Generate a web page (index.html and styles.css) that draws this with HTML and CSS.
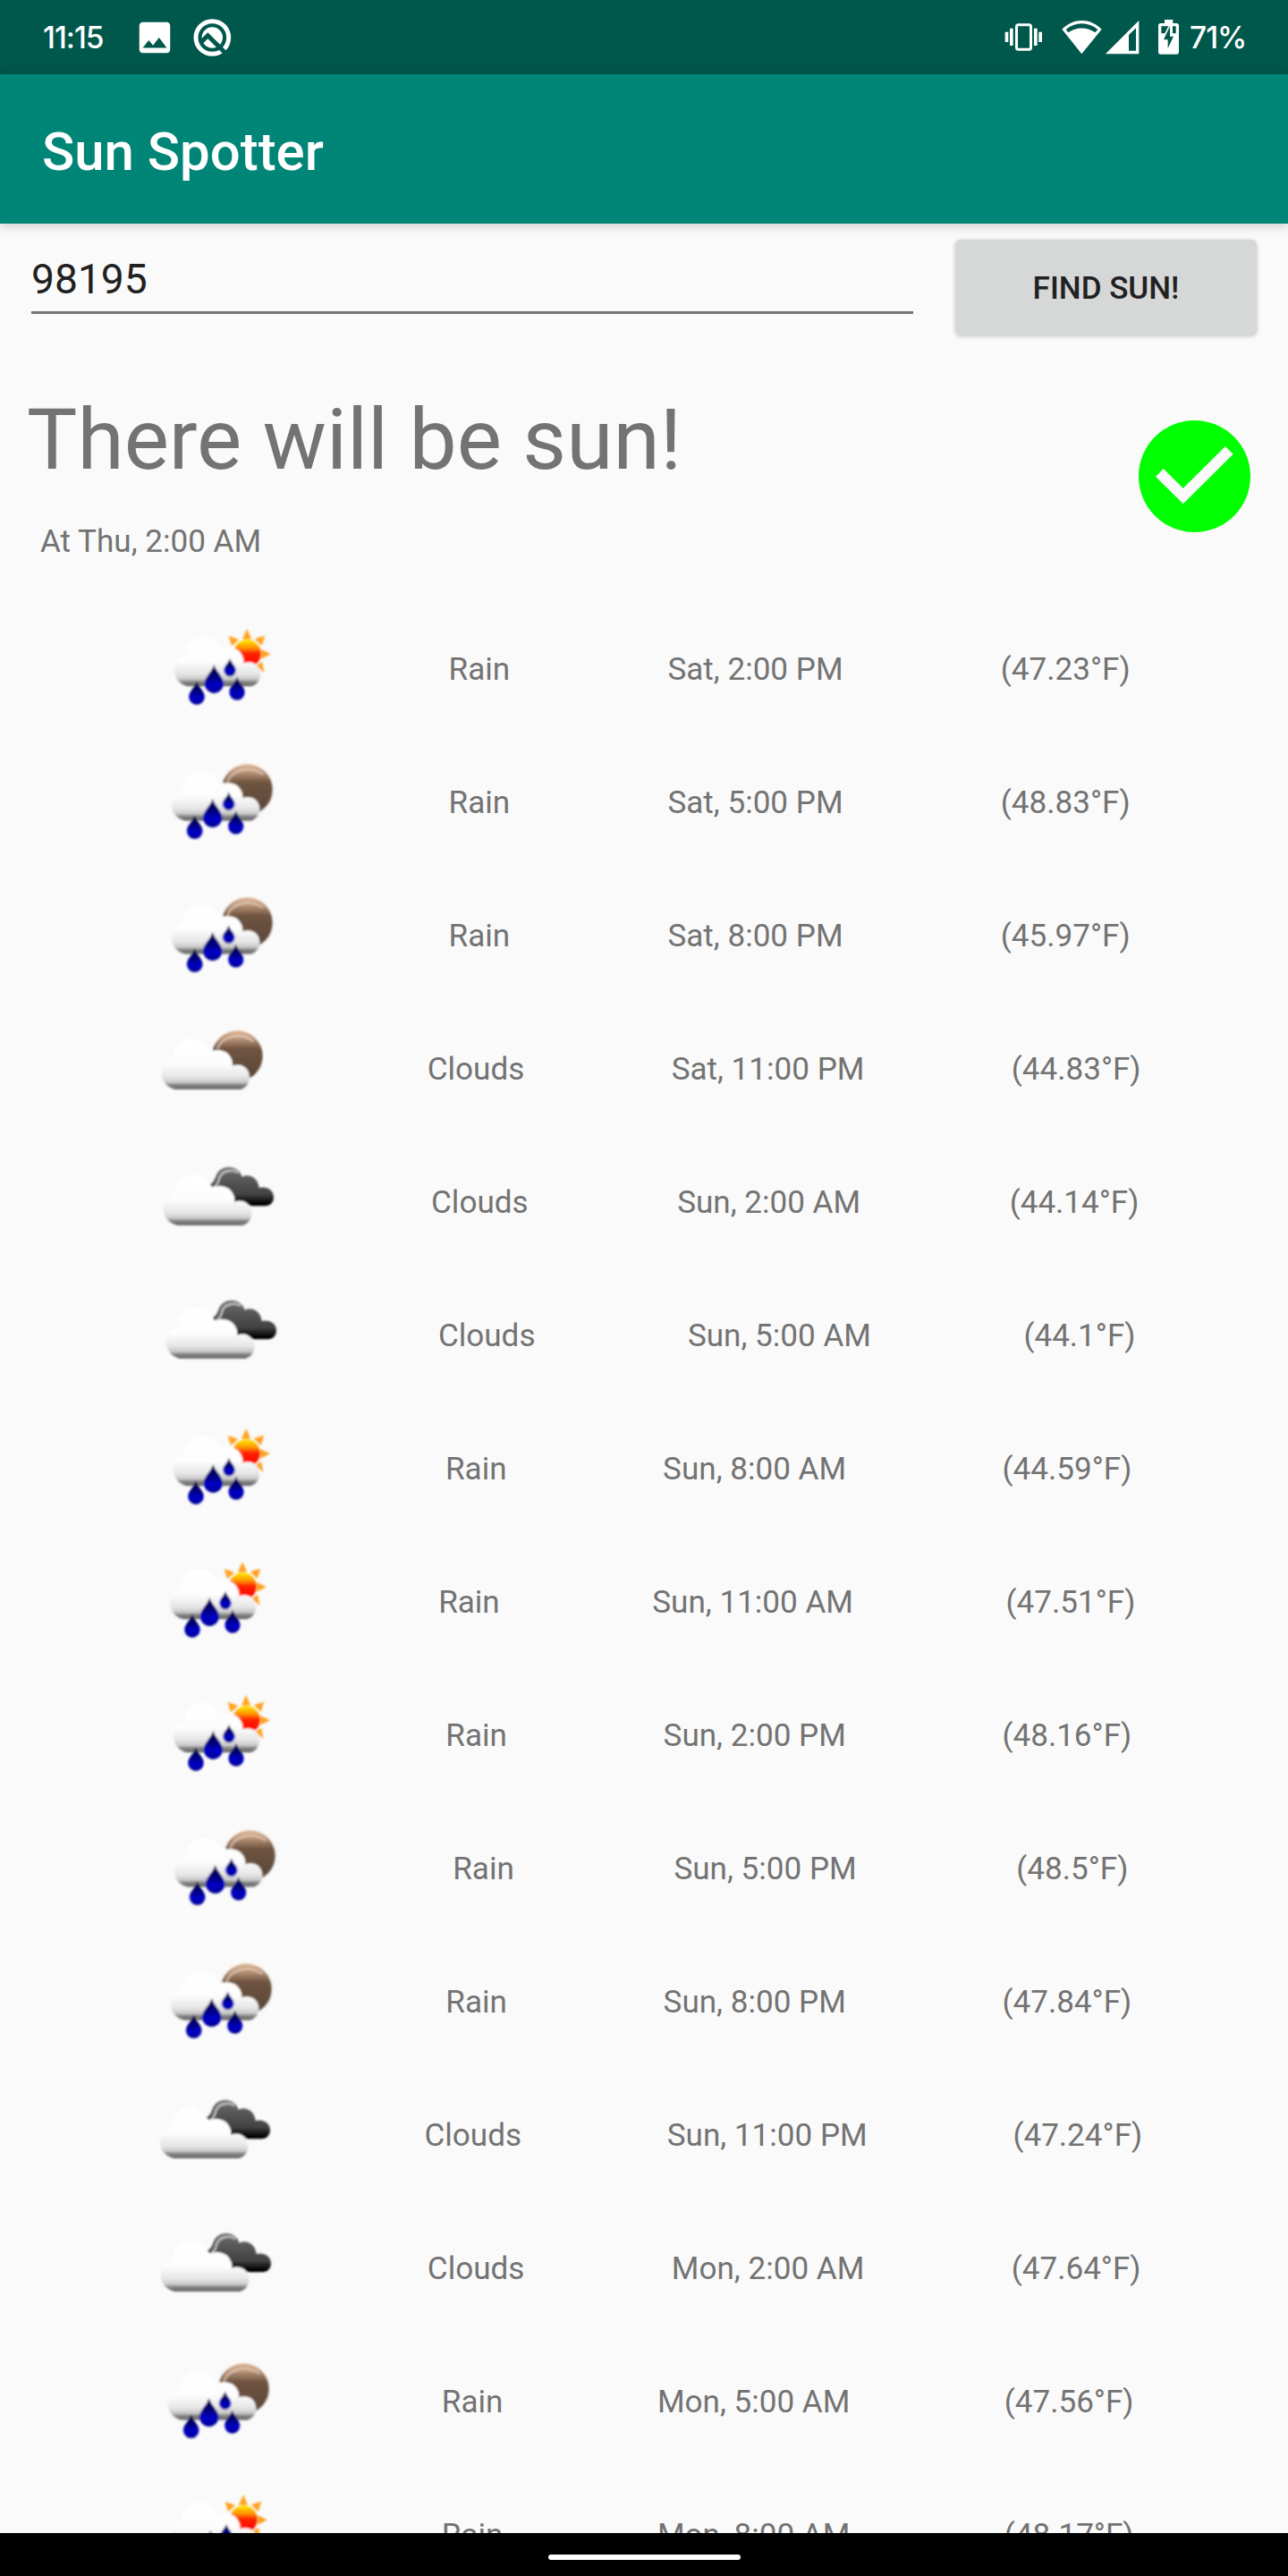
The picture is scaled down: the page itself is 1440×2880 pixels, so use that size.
FILE: index.html
```html
<!DOCTYPE html>
<html lang="en">
<head>
<meta charset="utf-8">
<title>Sun Spotter</title>
<link rel="stylesheet" href="styles.css">
</head>
<body>
<svg class="sprite" width="0" height="0" aria-hidden="true">
  <defs>
    <linearGradient id="cloudFill" x1="0" y1="0" x2="0" y2="1">
      <stop offset="0" stop-color="#fff"/><stop offset=".5" stop-color="#fdfdfd"/>
      <stop offset=".75" stop-color="#e6e6e6"/><stop offset=".86" stop-color="#c8c8c8"/>
      <stop offset=".91" stop-color="#858585"/><stop offset="1" stop-color="#636363"/>
    </linearGradient>
    <linearGradient id="sunFill" x1="0" y1="0" x2="0" y2="1">
      <stop offset="0" stop-color="#ffe800"/><stop offset=".28" stop-color="#ff9800"/>
      <stop offset=".5" stop-color="#ff2000"/><stop offset="1" stop-color="#f00"/>
    </linearGradient>
    <linearGradient id="moonFill" x1="0" y1="0" x2="0" y2="1">
      <stop offset="0" stop-color="#e2b896"/><stop offset=".17" stop-color="#b48f74"/>
      <stop offset=".36" stop-color="#6f5441"/><stop offset="1" stop-color="#594637"/>
    </linearGradient>
    <linearGradient id="darkFill" x1="0" y1="0" x2="0" y2="1">
      <stop offset="0" stop-color="#777"/><stop offset=".25" stop-color="#5c5c5c"/>
      <stop offset=".7" stop-color="#424242"/><stop offset=".95" stop-color="#000"/>
    </linearGradient>
    <linearGradient id="dropFill" x1="0" y1="0" x2="0" y2="1">
      <stop offset="0" stop-color="#000030"/><stop offset=".45" stop-color="#000080"/>
      <stop offset=".7" stop-color="#0000c8"/><stop offset="1" stop-color="#000090"/>
    </linearGradient>
    <filter id="soft"><feGaussianBlur stdDeviation="2.5"/></filter>
    <path id="cloud" fill="url(#cloudFill)" d="M110 262C80 255 63 230 64 203C66 178 82 163 102 155C106 118 130 92 163 92C192 92 215 110 225 137C240 126 275 127 290 145C300 157 305 170 302 183C325 172 360 185 360 220C360 240 350 256 330 262Z"/>
    <path id="drop" fill="url(#dropFill)" d="M0-50C4-30 27-16 27 4A27 27 0 0 1-27 4C-27-16-4-30 0-50Z"/>
    <g id="moon">
      <circle r="85" fill="url(#moonFill)"/>
      <path d="M-67-24C-52-66 8-82 54-50" fill="none" stroke="#e8d4c4" stroke-width="7" opacity=".7"/>
    </g>
  </defs>
  <symbol id="rain-day" viewBox="54 -21 447 447">
    <g filter="url(#soft)">
      <path fill="#ffa01e" d="M354 69L339 104H369ZM414 92L380 103L404 126ZM434 154L402 138V170ZM412 217L385 192L405 180ZM293 93L303 127L327 105Z"/>
      <circle cx="355" cy="152" r="46" fill="url(#sunFill)"/>
      <use href="#cloud" transform="translate(48 5) scale(.975 .98)"/>
      <use href="#drop" transform="translate(186 293) scale(.98)"/>
      <use href="#drop" transform="translate(244 248) scale(1.18)"/>
      <use href="#drop" transform="translate(297 205) scale(.75)"/>
      <use href="#drop" transform="translate(321 278) scale(.96)"/>
    </g>
  </symbol>
  <symbol id="rain-night" viewBox="54 -21 447 447">
    <g filter="url(#soft)">
      <use href="#moon" transform="translate(355 161)"/>
      <use href="#cloud" transform="translate(37 13) scale(1 .965)"/>
      <use href="#drop" transform="translate(179 296) scale(.98)"/>
      <use href="#drop" transform="translate(239 251) scale(1.18)"/>
      <use href="#drop" transform="translate(293 207) scale(.75)"/>
      <use href="#drop" transform="translate(317 281) scale(.96)"/>
    </g>
  </symbol>
  <symbol id="cloud-night" viewBox="15 -32 447 447">
    <g filter="url(#soft)">
      <use href="#moon" transform="translate(319 150)"/>
      <use href="#cloud"/>
    </g>
  </symbol>
  <symbol id="cloud-dark" viewBox="20 -32 447 447">
    <g filter="url(#soft)">
      <path fill="url(#darkFill)" d="M222 134C238 128 240 112 246 100C262 66 318 66 331 108C355 96 385 112 388 145C412 138 437 152 437 176C437 194 425 206 408 206H300Z"/>
      <path d="M236 142C262 136 240 96 286 88C300 84 308 88 318 94" fill="none" stroke="#c0c0c0" stroke-width="7"/>
      <use href="#cloud" transform="translate(3 9)"/>
    </g>
  </symbol>
</svg>

<div class="screen">
  <header class="status">
    <span class="clock">11:15</span>
    <svg class="ico-image" viewBox="0 0 24 24"><path fill="#fff" d="M21 19V5c0-1.1-.9-2-2-2H5c-1.1 0-2 .9-2 2v14c0 1.1.9 2 2 2h14c1.1 0 2-.9 2-2zM8.5 13.5l2.5 3.01L14.5 12l4.5 6H5l3.5-4.5z"/></svg>
    <svg class="ico-q" viewBox="648 60 129 126">
      <circle cx="712" cy="123" r="55" fill="none" stroke="#fff" stroke-width="15"/>
      <circle cx="712" cy="123" r="35" fill="#fff"/>
      <path d="M672 141L697 116L770 189" fill="none" stroke="#00574b" stroke-width="15"/>
    </svg>
    <svg class="ico-status" viewBox="120 0 600 249">
      <g fill="#fff">
        <rect x="169.500" y="83.500" width="48" height="82" rx="6" fill="none" stroke="#fff" stroke-width="9"/>
        <path d="M147 95h11v58h-11zM131 107h11v34h-11zM228 95h11v58h-11zM244 107h11v34h-11z"/>
        <path fill-rule="evenodd" d="M322 98C360 59 417 59 455 98L388 181ZM335 99L343 109C370 90 406 90 433 109L442 99C410 72 367 72 335 99Z"/>
        <path fill-rule="evenodd" d="M468 181L580 69V181ZM546 117V170H570V94Z"/>
        <path fill-rule="evenodd" d="M666 66H694V78H706Q714 78 714 86V174Q714 182 706 182H653Q645 182 645 174V86Q645 78 653 78H666ZM655 88V112H667L679 88ZM684 88V122H696L677 162V133H663L684 88ZM693 88V112H704V88Z"/>
      </g>
    </svg>
    <span class="battery">71%</span>
  </header>
  <div class="toolbar"><h1>Sun Spotter</h1></div>

  <main class="content">
    <div class="search">
      <div class="zip">98195</div>
      <button class="find" type="button">FIND SUN!</button>
    </div>
    <section class="result">
      <div class="result-text">
        <h2>There will be sun!</h2>
        <p>At Thu, 2:00 AM</p>
      </div>
      <svg class="check" viewBox="820 690 374 374">
        <circle cx="1007" cy="877" r="187" fill="#0f0"/>
        <path d="M890 865L969 943L1123 790" fill="none" stroke="#fafafa" stroke-width="37"/>
      </svg>
    </section>
    <ul class="forecast">
      <li><svg><use href="#rain-day"/></svg><span>Rain</span><span>Sat, 2:00 PM</span><span>(47.23°F)</span></li>
      <li><svg><use href="#rain-night"/></svg><span>Rain</span><span>Sat, 5:00 PM</span><span>(48.83°F)</span></li>
      <li><svg><use href="#rain-night"/></svg><span>Rain</span><span>Sat, 8:00 PM</span><span>(45.97°F)</span></li>
      <li><svg><use href="#cloud-night"/></svg><span>Clouds</span><span>Sat, 11:00 PM</span><span>(44.83°F)</span></li>
      <li><svg><use href="#cloud-dark"/></svg><span>Clouds</span><span>Sun, 2:00 AM</span><span>(44.14°F)</span></li>
      <li><svg><use href="#cloud-dark"/></svg><span>Clouds</span><span>Sun, 5:00 AM</span><span>(44.1°F)</span></li>
      <li><svg><use href="#rain-day"/></svg><span>Rain</span><span>Sun, 8:00 AM</span><span>(44.59°F)</span></li>
      <li><svg><use href="#rain-day"/></svg><span>Rain</span><span>Sun, 11:00 AM</span><span>(47.51°F)</span></li>
      <li><svg><use href="#rain-day"/></svg><span>Rain</span><span>Sun, 2:00 PM</span><span>(48.16°F)</span></li>
      <li><svg><use href="#rain-night"/></svg><span>Rain</span><span>Sun, 5:00 PM</span><span>(48.5°F)</span></li>
      <li><svg><use href="#rain-night"/></svg><span>Rain</span><span>Sun, 8:00 PM</span><span>(47.84°F)</span></li>
      <li><svg><use href="#cloud-dark"/></svg><span>Clouds</span><span>Sun, 11:00 PM</span><span>(47.24°F)</span></li>
      <li><svg><use href="#cloud-dark"/></svg><span>Clouds</span><span>Mon, 2:00 AM</span><span>(47.64°F)</span></li>
      <li><svg><use href="#rain-night"/></svg><span>Rain</span><span>Mon, 5:00 AM</span><span>(47.56°F)</span></li>
      <li><svg><use href="#rain-day"/></svg><span>Rain</span><span>Mon, 8:00 AM</span><span>(48.17°F)</span></li>
    </ul>
  </main>
  <footer class="navbar"><div class="handle"></div></footer>
</div>
</body>
</html>
```

FILE: styles.css
```css
* { box-sizing: border-box; margin: 0; padding: 0; }
body { background: #fafafa; font-family: Roboto, sans-serif; overflow: hidden; }
.sprite { display: block; }
.screen { width: 1440px; height: 2880px; display: flex; flex-direction: column; overflow: hidden; }

.status { height: 83px; flex: none; background: #00574b; color: #fff; display: flex; align-items: center; padding-left: 48px; font-family: Inter, sans-serif; font-weight: 500; font-size: 33.500px; }
.clock { width: 102px; letter-spacing: -1px; }
.ico-image { width: 46px; height: 46px; }
.ico-q { width: 43px; height: 42px; margin-left: 20px; }
.ico-status { width: 200px; height: 83px; margin-left: auto; }
.battery { width: 120px; padding-left: 10px; letter-spacing: -1px; }

.toolbar { height: 167px; flex: none; background: #008577; color: #fff; display: flex; align-items: center; padding-left: 47px; box-shadow: 0 3px 12px rgba(0, 0, 0, .18); z-index: 1; }
.toolbar h1 { font-size: 59.900px; font-weight: 500; line-height: 70px; padding-top: 6px; }

.content { height: 2582px; flex: none; overflow: hidden; display: flex; flex-direction: column; background: #fafafa; }
.search { display: flex; align-items: flex-start; justify-content: space-between; height: 170px; flex: none; padding: 18px 35px 0; }
.zip { width: 986px; height: 83px; border-bottom: 3px solid #757575; font-size: 46.200px; line-height: 54px; color: #212121; padding-top: 17px; }
.find { width: 337px; height: 107px; border: 0; border-radius: 6px; background: #d6d7d7; color: #212121; font: 500 35px/42px Roboto, sans-serif; padding-top: 2px; box-shadow: 0 1px 5px rgba(0, 0, 0, .22); }
.result { display: flex; justify-content: space-between; height: 253px; flex: none; padding: 0 42px 0 30px; }
.result-text { color: #737373; }
.result h2 { font-size: 94.700px; line-height: 112px; font-weight: 400; padding-top: 16px; }
.result p { font-size: 35.100px; line-height: 42px; padding: 36px 0 0 15px; }
.check { width: 125px; height: 125px; margin-top: 50px; }

.forecast { list-style: none; }
.forecast li { height: 149px; display: flex; justify-content: space-evenly; align-items: center; font-size: 35.100px; line-height: 42px; color: #737373; white-space: nowrap; }
.forecast svg { width: 149px; height: 149px; flex: none; }
.forecast span { padding-top: 1px; }

.navbar { flex: 1; background: #000; display: flex; justify-content: center; padding-top: 24px; }
.handle { width: 215px; height: 6px; border-radius: 3px; background: #fff; }
```
